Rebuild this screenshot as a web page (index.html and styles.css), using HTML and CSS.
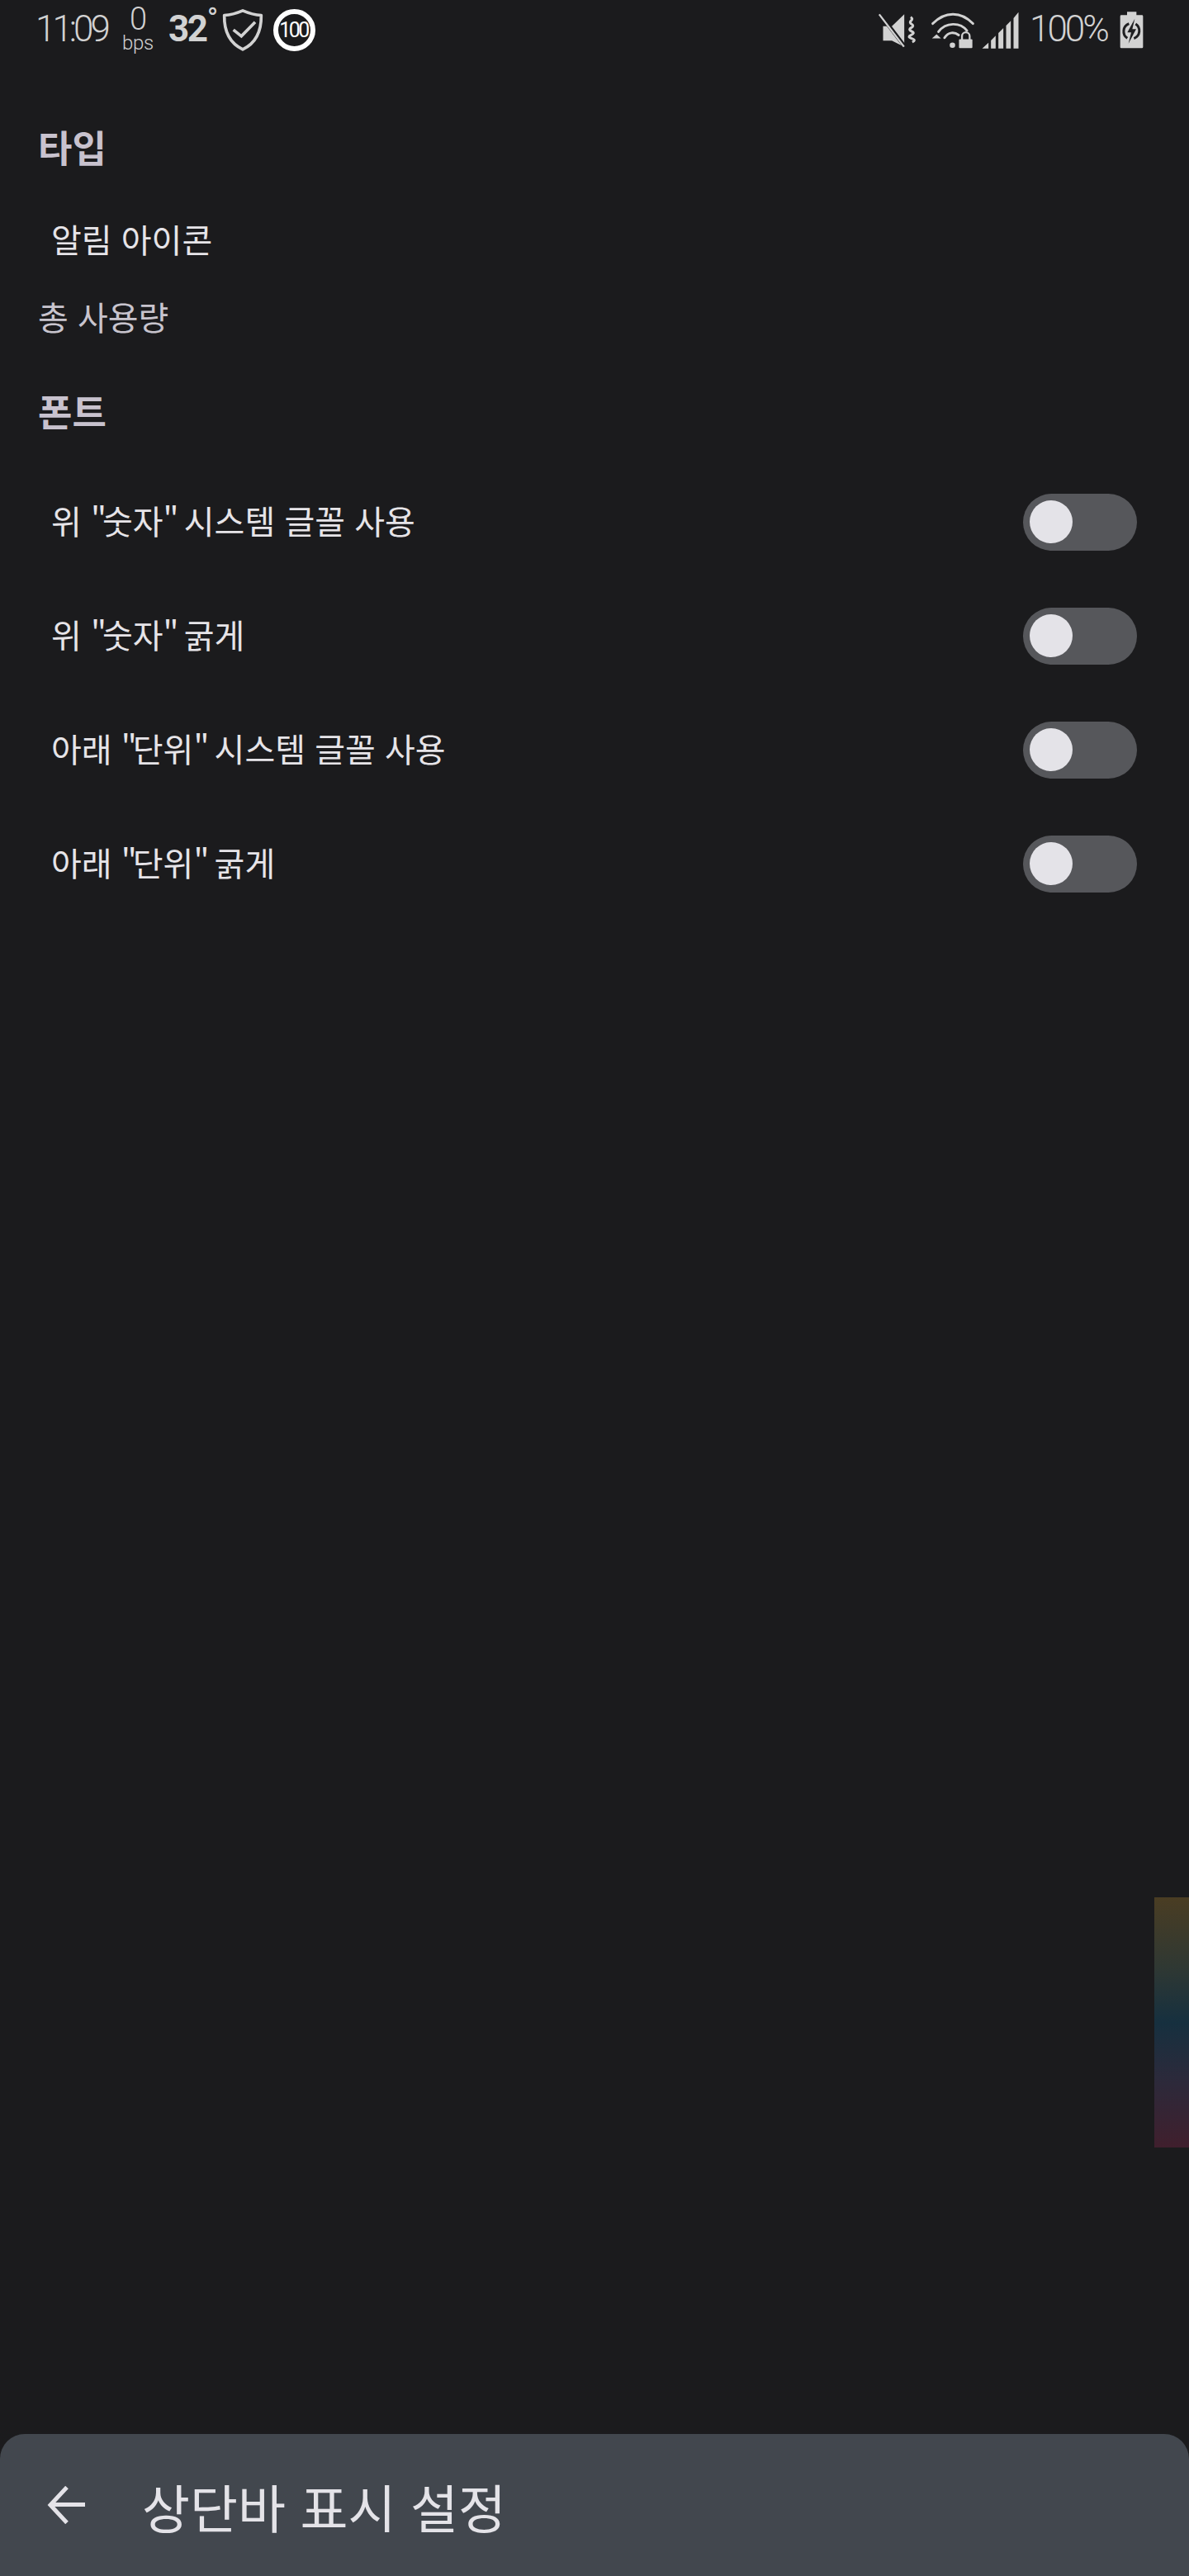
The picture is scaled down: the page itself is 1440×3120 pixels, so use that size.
FILE: index.html
```html
<!DOCTYPE html>
<html lang="ko">
<head>
<meta charset="utf-8">
<title>상단바 표시 설정</title>
<link rel="stylesheet" href="styles.css">
</head>
<body>
<div class="page">
  <header class="status">
    <span class="time">11:09</span>
    <span class="speed"><span class="speed-num">0</span><span class="speed-unit">bps</span></span>
    <span class="temp"><span class="temp-num">32</span><span class="temp-deg">°</span></span>
    <svg class="ic-shield" viewBox="805 30 150 158"><path d="M880 38C852 50 832 54 813 55C812 112 832 156 880 179C928 156 948 112 947 55C928 54 908 50 880 38Z" fill="none" stroke="#d2d2d2" stroke-width="11" stroke-linejoin="round"/><path d="M846 108L875 131L925 80" fill="none" stroke="#d2d2d2" stroke-width="11"/></svg>
    <span class="ring">100</span>
    <span class="status-right">
      <svg class="ic-mute" viewBox="66 42 140 135"><path d="M88 95H120L165 52V170L120 148H88Z" fill="#d2d2d2"/><path d="M70 42L172 176" stroke="#1b1b1d" stroke-width="14"/><path d="M74 52L164 170" stroke="#d2d2d2" stroke-width="7"/><path d="M188 62q10 6 2 13t2 13t-2 13t2 13t-2 13t2 13t2 13" fill="none" stroke="#d2d2d2" stroke-width="9"/></svg>
      <svg class="ic-wifi" viewBox="264 42 158 136"><path d="M271 86C315 40 375 40 418 86" fill="none" stroke="#d2d2d2" stroke-width="9" stroke-linecap="round"/><path d="M292 116C318 80 372 80 396 112" fill="none" stroke="#d2d2d2" stroke-width="9" stroke-linecap="round"/><path d="M314 138C328 116 350 116 366 128" fill="none" stroke="#d2d2d2" stroke-width="9" stroke-linecap="round"/><circle cx="343" cy="165" r="10" fill="#d2d2d2"/><path d="M268 140L285 125L301 140Z" fill="#d2d2d2"/><rect x="367" y="143" width="49" height="33" rx="3" fill="#d2d2d2"/><path d="M378 146V132a14 14 0 0 1 28 0V146" fill="none" stroke="#d2d2d2" stroke-width="7"/></svg>
      <svg class="ic-signal" viewBox="448 42 134 135"><path d="M449 176L472 155V176Z M481 147L498 130V176H481Z M508 120L526 102V176H508Z M536 93L553 76V176H536Z M563 66L581 44V176H563Z" fill="#d2d2d2"/></svg>
      <span class="battery-text">100%</span>
      <svg class="ic-battery" viewBox="350 44 87 135"><path d="M377 45H411V57H431a4 4 0 0 1 4 4V173a4 4 0 0 1-4 4H356a4 4 0 0 1-4-4V61a4 4 0 0 1 4-4H377Z" fill="#d2d2d2"/><path d="M384 88A30 30 0 0 0 378 141M402 142A30 30 0 0 0 408 89" fill="none" stroke="#1f1f21" stroke-width="9"/><path d="M405 70L378 120H392L382 160L410 108H396Z" fill="#1f1f21"/></svg>
    </span>
  </header>

  <main class="content">
    <h2 class="section first">타입</h2>
    <div class="item">알림 아이콘</div>
    <div class="item-dim">총 사용량</div>
    <h2 class="section second">폰트</h2>
    <ul class="rows">
      <li class="row"><span class="label">위 <span class="q">"</span>숫자<span class="q">"</span> 시스템 글꼴 사용</span><span class="toggle"><span class="thumb"></span></span></li>
      <li class="row"><span class="label">위 <span class="q">"</span>숫자<span class="q">"</span> 굵게</span><span class="toggle"><span class="thumb"></span></span></li>
      <li class="row"><span class="label">아래 <span class="q">"</span>단위<span class="q">"</span> 시스템 글꼴 사용</span><span class="toggle"><span class="thumb"></span></span></li>
      <li class="row"><span class="label">아래 <span class="q">"</span>단위<span class="q">"</span> 굵게</span><span class="toggle"><span class="thumb"></span></span></li>
    </ul>
  </main>

  <div class="edge-strip"></div>

  <footer class="bar">
    <svg class="ic-back" viewBox="0 0 47 46"><path d="M46 22.500H4M24 1.500L4 23L24 44.500" fill="none" stroke="#e4e3e8" stroke-width="5"/></svg>
    <span class="bar-title">상단바 표시 설정</span>
  </footer>
</div>
</body>
</html>
```

FILE: styles.css
```css
* { box-sizing: border-box; }
html, body { margin: 0; padding: 0; background: #1b1b1d; }
.page {
  position: relative;
  width: 1440px;
  height: 3120px;
  overflow: hidden;
  display: flex;
  flex-direction: column;
  background: #1b1b1d;
  font-family: "Noto Sans CJK KR", "Noto Sans", sans-serif;
}

.status {
  height: 70px;
  display: flex;
  align-items: flex-start;
  padding-left: 43px;
  color: #d2d2d2;
  font-family: Roboto, sans-serif;
  flex: none;
}
.time { width: 97px; margin-top: 10px; font-size: 44px; line-height: 50px; font-weight: 300; letter-spacing: -4px; }
.speed { width: 54px; display: flex; flex-direction: column; align-items: center; }
.speed-num { margin-top: 4px; font-size: 38px; line-height: 38px; font-weight: 300; letter-spacing: -1px; }
.speed-unit { font-size: 24px; line-height: 20px; font-weight: 300; letter-spacing: -.3px; }
.temp { width: 75px; margin-top: 10px; margin-left: 10px; display: flex; }
.temp-num { font-size: 44px; line-height: 50px; font-weight: 700; letter-spacing: -2.400px; }
.temp-deg { font-size: 36px; line-height: 30px; margin-left: 1px; margin-top: -2px; font-weight: 400; }
.ic-shield { width: 50px; height: 53px; margin-top: 10px; margin-left: -10px; }
.ring {
  width: 51px;
  height: 51px;
  margin: 11px 0 0 12px;
  border: 6px solid #fff;
  border-radius: 50%;
  display: flex;
  align-items: center;
  justify-content: center;
  color: #fff;
  font-size: 25px;
  letter-spacing: -2.500px;
  text-indent: -2px;
}
.status-right { margin-left: auto; display: flex; align-items: flex-start; padding-right: 55px; }
.ic-mute { width: 47px; height: 45px; margin: 14px 0 0 0; }
.ic-wifi { width: 53px; height: 45px; margin: 14px 0 0 18px; }
.ic-signal { width: 45px; height: 45px; margin: 14px 0 0 9px; }
.battery-text { width: 110px; margin: 10px 0 0 13px; font-size: 44px; line-height: 50px; font-weight: 300; letter-spacing: -3px; }
.ic-battery { width: 29px; height: 45px; margin: 14px 0 0 -1px; }

.content { flex: 1; padding-top: 78px; }
.section { margin: 0; height: 60px; line-height: 60px; padding-left: 46px; font-size: 45px; font-weight: 700; color: #c8c2ce; }
.section.second { margin-top: 54px; }
.item { margin-top: 50px; height: 62px; line-height: 62px; padding-left: 62px; font-size: 40px; color: #e6e4e8; }
.item-dim { margin-top: 32px; height: 62px; line-height: 62px; padding-left: 46px; font-size: 40px; color: #c8c4cd; }
.rows { list-style: none; margin: 35px 0 0; padding: 0; }
.row {
  height: 138px;
  padding: 35px 63px 34px 62px;
  display: flex;
  align-items: center;
  justify-content: space-between;
  font-size: 40px;
  color: #e6e4e8;
}
.label { margin-bottom: 6px; }
.q { letter-spacing: -5px; }
.toggle { width: 138px; height: 69px; padding: 8px; border-radius: 35px; background: #56575b; display: flex; flex: none; }
.thumb { width: 52px; height: 52px; border-radius: 50%; background: #e4e3e8; }

.edge-strip {
  position: absolute;
  right: 0;
  top: 2298px;
  width: 42px;
  height: 303px;
  background: linear-gradient(to bottom, #4a3d23 0%, #2f3833 28%, #16303f 50%, #2b2a3b 72%, #401f2d 100%);
}

.bar {
  height: 172px;
  flex: none;
  display: flex;
  align-items: center;
  padding: 0 0 0 57px;
  background: #42474e;
  border-radius: 30px 30px 0 0;
}
.ic-back { width: 47px; height: 46px; flex: none; }
.bar-title { margin-left: 68px; font-size: 63px; color: #e4e3e8; }
```
